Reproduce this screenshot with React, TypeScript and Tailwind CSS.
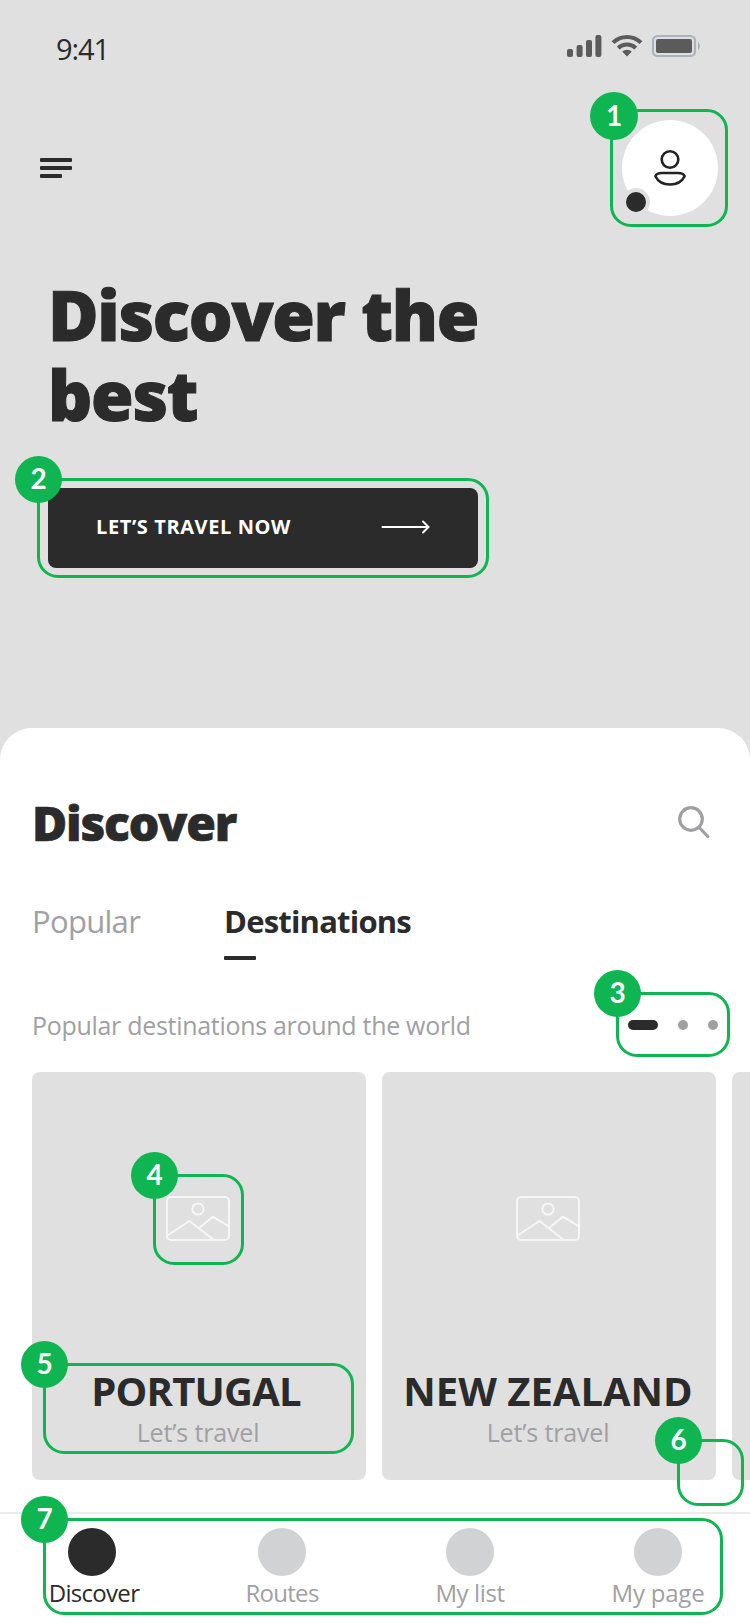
import type { ReactNode } from "react";
import clsx from "clsx";

type MarkProps = {
  n: number;
  className: string;
  badge?: string;
};

// numbered green outline that sits on top of a part of the screen
function Mark({ n, className, badge = "-left-[25px] -top-[25px] size-[47px]" }: MarkProps) {
  return (
    <div
      className={clsx(
        "absolute z-10 rounded-[21px] border-[3px] border-[#0fb550] pointer-events-none",
        className
      )}
    >
      <span
        className={clsx(
          "absolute flex items-center justify-center rounded-full bg-[#0fb550] pb-[3px] font-['Lato',sans-serif] text-[28px] leading-none font-bold text-white",
          badge
        )}
      >
        {n}
      </span>
    </div>
  );
}

function StatusIcons() {
  return (
    <svg width="135" height="24" viewBox="0 0 135 24" fill="#5b5b5b">
      <rect x="0" y="15" width="6" height="8" rx="2" />
      <rect x="9.6" y="11" width="6" height="12" rx="2" />
      <rect x="19" y="6" width="6" height="17" rx="2" />
      <rect x="28.4" y="1" width="6" height="22" rx="2" />
      <g fill="none" stroke="#5b5b5b" strokeWidth="4">
        <path d="M46 8.6a20 20 0 0 1 28 0" />
        <path d="M51.2 14a12.6 12.6 0 0 1 17.6 0" />
      </g>
      <path d="M55.2 17.6a7 7 0 0 1 9.6 0L60 22.4Z" />
      <rect x="86" y="2" width="42" height="20" rx="4.5" fill="none" stroke="#a9b3bd" strokeWidth="2.2" />
      <rect x="89" y="5" width="36" height="14" rx="2" />
      <path d="M131 8c2.6 1 2.6 7 0 8Z" fill="#a9b3bd" />
    </svg>
  );
}

function PictureIcon() {
  return (
    <svg width="64" height="45" viewBox="0 0 64 45" fill="none" stroke="#f6f6f6" strokeWidth="2">
      <rect x="1" y="1" width="62" height="43" rx="4" />
      <circle cx="32" cy="13" r="5.6" />
      <path d="M1.5 39.5 23.5 25l24 18.8M33 32l14-11.2 15.5 9.4" />
    </svg>
  );
}

function Card({ title, titleClass, children }: { title: string; titleClass: string; children?: ReactNode }) {
  return (
    <div className="relative flex h-[408px] w-[334px] shrink-0 flex-col items-center rounded-lg bg-[#e0e0e0] pt-[124px] pr-0.5 pb-8 text-center">
      <PictureIcon />
      <div className="mt-auto">
        <p className={clsx("text-[40px] leading-[48px] font-bold whitespace-nowrap", titleClass)}>{title}</p>
        <p className="mt-px text-[25px] leading-8 tracking-[-0.15px] text-[#a0a0a4]">Let’s travel</p>
      </div>
      {children}
    </div>
  );
}

const navItems = [
  { label: "Discover", className: "mr-0.5", dot: "bg-[#2b2b2b]", text: "pl-1 tracking-[-0.7px] text-[#2b2b2b]" },
  { label: "Routes", className: "", dot: "bg-[#d1d2d4]", text: "tracking-[-0.7px] text-[#a0a0a4]" },
  { label: "My list", className: "", dot: "bg-[#d1d2d4]", text: "tracking-[-0.4px] text-[#a0a0a4]" },
  { label: "My page", className: "", dot: "bg-[#d1d2d4]", text: "tracking-[-0.2px] text-[#a0a0a4]" },
];

export default function App() {
  return (
    <main className="flex h-[1624px] w-[750px] flex-col overflow-hidden bg-[#e0e0e0] font-['Open_Sans',sans-serif] text-[#2b2b2b]">
      <div className="flex h-[120px] items-start justify-between pt-[34px] pr-[48px] pl-14">
        <p className="-mt-px text-[29px] leading-8 tracking-[-1.1px]">9:41</p>
        <StatusIcons />
      </div>

      <header className="flex h-24 items-center justify-between pr-8 pl-10">
        <div className="flex flex-col gap-1">
          <span className="h-1 w-8 rounded-[1px] bg-[#2b2b2b]"></span>
          <span className="h-1 w-8 rounded-[1px] bg-[#2b2b2b]"></span>
          <span className="h-1 w-[22px] rounded-[1px] bg-[#2b2b2b]"></span>
        </div>
        <div className="relative flex size-24 items-center justify-center rounded-full bg-white">
          <svg width="34" height="38" viewBox="0 0 34 38" fill="none" stroke="#222" strokeWidth="2.6">
            <circle cx="17" cy="10.5" r="8.3" />
            <path d="M9 24h16c4 0 6 1.600 6.600 3.200C29 32.500 23.500 35.500 17 35.500S5 32.500 2.400 27.200C3 25.600 5 24 9 24Z" strokeLinejoin="round" />
          </svg>
          <span className="absolute bottom-0 left-0 size-7 rounded-full border-4 border-[#e0e0e0] bg-[#2b2b2b]"></span>
          <Mark
            n={1}
            className="-top-[11px] -left-3 size-[118px]"
            badge="-left-[23px] -top-5 size-12"
          />
        </div>
      </header>

      <section className="px-12 pt-[58px]">
        <h1 className="text-[69px] leading-20 font-extrabold tracking-[-1.3px] [-webkit-text-stroke:1px]">
          Discover the
          <br />
          best
        </h1>
        <div className="relative mt-[54px] w-[430px]">
          <button className="flex h-20 w-full items-center justify-between rounded-lg bg-[#2b2b2b] px-12 pb-0.5 text-[20px] font-bold text-white">
            <span className="tracking-[0.6px]">LET’S TRAVEL NOW</span>
            <svg width="49" height="14" viewBox="0 0 49 14" fill="none" stroke="white" strokeWidth="2">
              <path d="M1.500 7h45.500M42 1.500 47.500 7l-5.500 5.500" strokeLinecap="round" />
            </svg>
          </button>
          <Mark n={2} className="-top-[10px] -left-[11px] h-[100px] w-[452px]" />
        </div>
      </section>

      <section className="mt-40 flex-1 rounded-t-[32px] bg-white pt-[62px]">
        <div className="flex items-center justify-between pr-10 pl-8">
          <h2 className="pt-px text-[48px] leading-[63px] font-extrabold tracking-[-1.2px] [-webkit-text-stroke:0.7px]">
            Discover
          </h2>
          <svg width="33" height="34" viewBox="0 0 33 34" fill="none" stroke="#a0a0a4" strokeWidth="3.2">
            <circle cx="14" cy="14" r="11.300" />
            <path d="m22.300 22.500 8.500 9" strokeLinecap="round" />
          </svg>
        </div>

        <div className="mt-[47px] flex gap-[84px] px-8 text-[31px] leading-10">
          <p className="w-[108px] tracking-[-0.7px] text-[#a0a0a4]">Popular</p>
          <div>
            <p className="font-bold tracking-[-0.8px]">Destinations</p>
            <div className="mt-[15px] h-1 w-8 rounded-[1px] bg-[#2b2b2b]"></div>
          </div>
        </div>

        <div className="mt-[47px] flex items-center justify-between pr-8 pl-8">
          <p className="text-[25px] leading-9 tracking-[-0.3px] text-[#a0a0a4]">Popular destinations around the world</p>
          <div className="relative flex items-center gap-5">
            <span className="h-2.5 w-[30px] rounded-full bg-[#2b2b2b]"></span>
            <span className="size-2.5 rounded-full bg-[#a0a0a4]"></span>
            <span className="size-2.5 rounded-full bg-[#a0a0a4]"></span>
            <Mark n={3} className="-top-7 -left-3 h-[65px] w-[114px]" />
          </div>
        </div>

        <div className="mt-[29px] flex gap-4 pl-8">
          <Card title="PORTUGAL" titleClass="pr-1 tracking-[-0.8px]">
            <Mark n={4} className="top-[102px] left-[121px] size-[91px]" />
            <Mark n={5} className="top-[291px] left-[11px] h-[91px] w-[311px]" />
          </Card>
          <Card title="NEW ZEALAND" titleClass="">
            <Mark n={6} className="top-[367px] left-[295px] size-[67px]" />
          </Card>
          <div className="h-[408px] w-[334px] shrink-0 rounded-lg bg-[#e0e0e0]"></div>
        </div>

        <nav className="relative mt-8 flex h-28 gap-[92px] border-t-2 border-[#ebebeb] px-11 pt-3.5">
          {navItems.map((item) => (
            <div key={item.label} className={clsx("flex w-24 shrink-0 flex-col items-center", item.className)}>
              <span className={clsx("size-12 rounded-full", item.dot)}></span>
              <span className={clsx("mt-px text-[24px] leading-8 whitespace-nowrap", item.text)}>{item.label}</span>
            </div>
          ))}
          <Mark n={7} className="top-1 left-[43px] h-[97px] w-[680px]" />
        </nav>
      </section>
    </main>
  );
}
